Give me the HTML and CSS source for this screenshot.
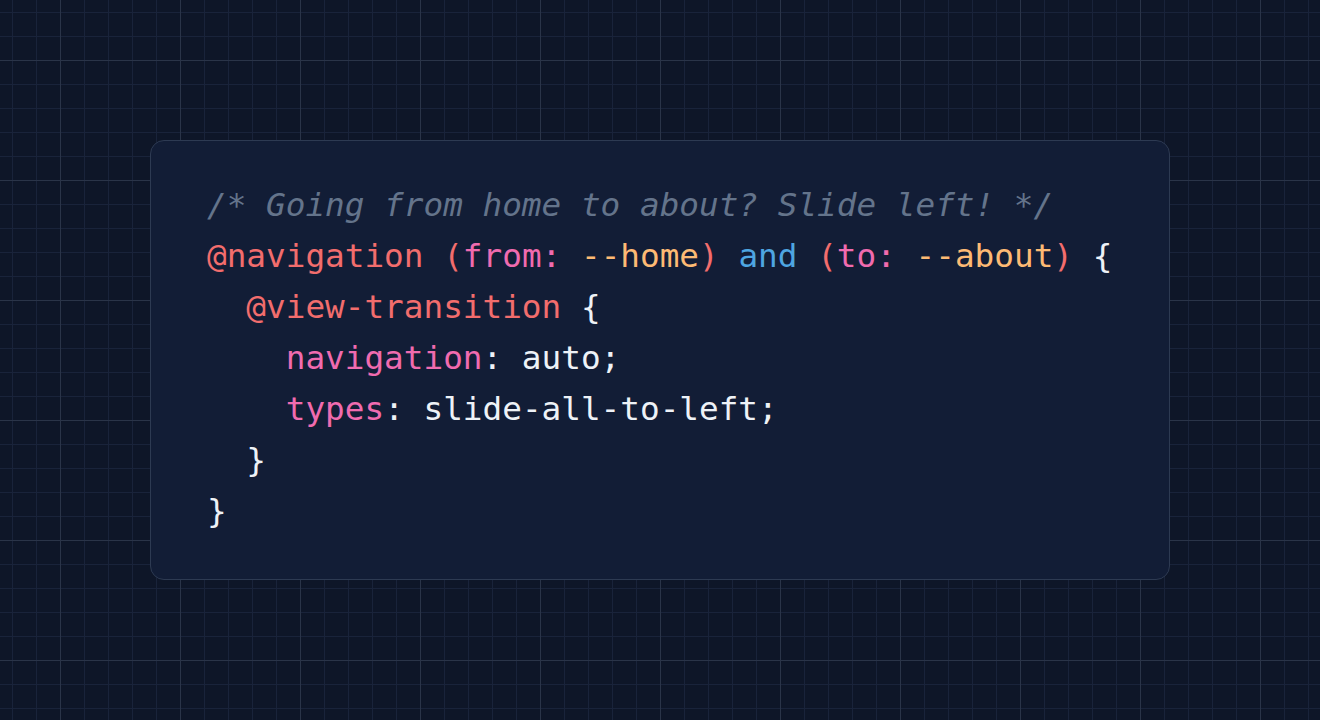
FILE: index.html
```html
<!DOCTYPE html>
<html lang="en">
<head>
<meta charset="utf-8">
<title>View transition navigation</title>
<link rel="stylesheet" href="styles.css">
</head>
<body>
<main class="stage">
<pre class="code"><code><span class="cm">/* Going from home to about? Slide left! */</span>
<span class="at">@navigation</span> <span class="at">(</span><span class="pr">from:</span> <span class="vr">--home</span><span class="at">)</span> <span class="kw">and</span> <span class="at">(</span><span class="pr">to:</span> <span class="vr">--about</span><span class="at">)</span> <span class="tx">{</span>
  <span class="at">@view-transition</span> <span class="tx">{</span>
    <span class="pr">navigation</span><span class="tx">: auto;</span>
    <span class="pr">types</span><span class="tx">: slide-all-to-left;</span>
  <span class="tx">}</span>
<span class="tx">}</span></code></pre>
</main>
</body>
</html>
```
FILE: styles.css
```css
html, body {
  margin: 0;
  padding: 0;
}
body {
  min-height: 100vh;
  background-color: #0e1628;
  background-image:
    linear-gradient(to right, #2a3448 1px, transparent 1px),
    linear-gradient(to bottom, #2a3448 1px, transparent 1px),
    linear-gradient(to right, #19233a 1px, transparent 1px),
    linear-gradient(to bottom, #19233a 1px, transparent 1px);
  background-size: 120px 120px, 120px 120px, 24px 24px, 24px 24px;
  background-position: 60px 60px, 60px 60px, 12px 12px, 12px 12px;
}
.stage {
  min-height: 100vh;
  display: flex;
  align-items: center;
  justify-content: center;
}
.code {
  box-sizing: border-box;
  width: 1020px;
  height: 440px;
  margin: 0;
  padding: 36px 56px 40px;
  background: #121d36;
  border: 1px solid #2d3a52;
  border-radius: 14px;
  font-family: "DejaVu Sans Mono", "Liberation Mono", monospace;
  font-size: 32.7px;
  line-height: 51px;
  color: #e5eaf1;
  display: flex;
  align-items: center;
}
.code code {
  font: inherit;
  white-space: pre;
}
.cm { color: #64748b; font-style: italic; }
.at { color: #f26d6d; }
.pr { color: #f06baf; }
.vr { color: #fdba74; }
.kw { color: #4ea6e2; }
.tx { color: #eef2f7; }
```
